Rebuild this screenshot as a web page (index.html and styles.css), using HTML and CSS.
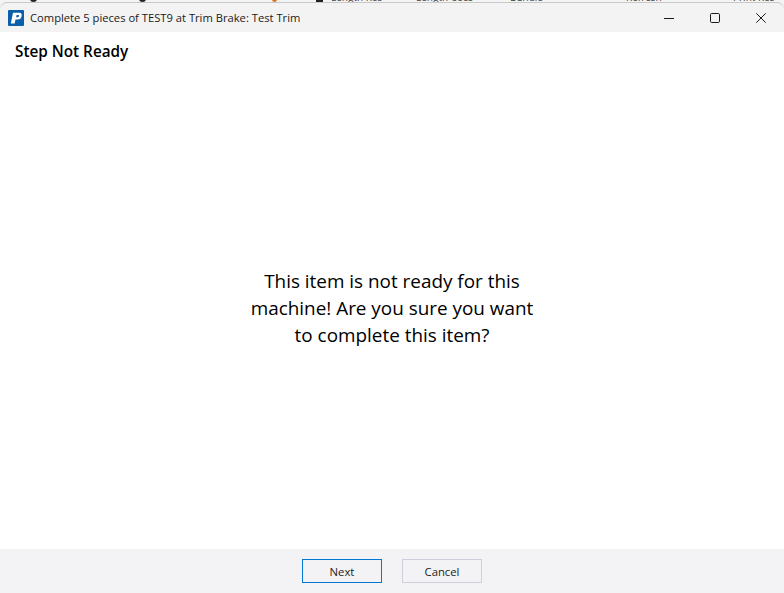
FILE: index.html
```html
<!DOCTYPE html>
<html lang="en">
<head>
<meta charset="utf-8">
<title>Complete 5 pieces of TEST9 at Trim Brake: Test Trim</title>
<link rel="stylesheet" href="styles.css">
</head>
<body>
<div class="backdrop" aria-hidden="true">
  <i class="dot dot-a"></i>
  <i class="dot dot-b"></i>
  <i class="dot dot-c"></i>
  <i class="dot dot-d"></i>
  <span class="frag frag-a">Length Res</span>
  <span class="frag frag-b">Length Uses</span>
  <span class="frag frag-c">Bundle</span>
  <span class="frag frag-d">Refresh</span>
  <span class="frag frag-e">Print Res</span>
</div>
<div class="window">
  <header class="titlebar">
    <svg class="app-icon" width="16" height="16" viewBox="0 0 16 16" aria-hidden="true">
      <rect width="16" height="16" rx="1" fill="#0b5ea8"/>
      <path d="M2.8 13.5 L5 2.8 H11.3 Q14.2 2.8 13.6 6 Q13 9.6 9.8 9.6 H7.5 L6.7 13.5 Z M8.1 7.3 H9.6 Q10.7 7.3 11 6 Q11.2 5 10.2 5 H8.6 Z" fill="#fff" fill-rule="evenodd"/>
    </svg>
    <span class="title">Complete 5 pieces of TEST9 at Trim Brake: Test Trim</span>
    <div class="controls">
      <button class="control" aria-label="Minimize"><svg width="10" height="10" viewBox="0 0 10 10"><path d="M0 5.5H10" stroke="#1a1a1a" stroke-width="1"/></svg></button>
      <button class="control" aria-label="Maximize"><svg width="10" height="10" viewBox="0 0 10 10"><rect x=".5" y=".5" width="9" height="9" rx="1.2" fill="none" stroke="#1a1a1a"/></svg></button>
      <button class="control" aria-label="Close"><svg width="10" height="10" viewBox="0 0 10 10"><path d="M.3 .3L9.7 9.7M9.7 .3L.3 9.7" stroke="#1a1a1a" stroke-width="1"/></svg></button>
    </div>
  </header>
  <main class="content">
    <h1 class="heading">Step Not Ready</h1>
    <div class="message-area">
      <p class="message">This item is not ready for this machine! Are you sure you want to complete this item?</p>
    </div>
  </main>
  <footer class="footer">
    <button class="btn btn-primary">Next</button>
    <button class="btn">Cancel</button>
  </footer>
</div>
</body>
</html>
```
FILE: styles.css
```css
* { box-sizing: border-box; }
html, body { margin: 0; height: 100%; }
body {
  position: relative;
  background: #f4f4f4;
  font-family: "Open Sans", "Noto Sans", "Liberation Sans", sans-serif;
  color: #000;
  overflow: hidden;
}
.backdrop {
  position: absolute;
  top: 0;
  left: 0;
  width: 100%;
  height: 2px;
  overflow: hidden;
}
.dot {
  position: absolute;
  top: -4px;
  width: 7px;
  height: 6px;
  border-radius: 50%;
  background: #222;
}
.dot-a { left: 30px; }
.dot-b { left: 139px; }
.dot-c { left: 272px; width: 5px; background: #d9741c; }
.dot-d { left: 316px; border-radius: 0; }
.frag {
  position: absolute;
  bottom: -1px;
  font-size: 10px;
  line-height: 12px;
  color: #444;
  white-space: nowrap;
}
.frag-a { left: 331px; }
.frag-b { left: 416px; }
.frag-c { left: 510px; }
.frag-d { left: 626px; }
.frag-e { left: 733px; }
.window {
  height: 593px;
  padding-top: 2px;
  display: flex;
  flex-direction: column;
  position: relative;
}
.titlebar {
  height: 30px;
  flex: none;
  display: flex;
  align-items: center;
  padding-left: 8px;
  background: #f3f3f3;
  border-top: 1px solid #c8c8c8;
  border-radius: 7px 7px 0 0;
}
.app-icon { flex: none; }
.title {
  margin-left: 6px;
  font-size: 11.2px;
  color: #1a1a1a;
  white-space: nowrap;
}
.controls {
  margin-left: auto;
  display: flex;
}
.control {
  width: 46px;
  height: 29px;
  padding: 0;
  border: 0;
  background: none;
  display: flex;
  align-items: center;
  justify-content: center;
}
.content {
  flex: 1;
  display: flex;
  flex-direction: column;
  background: #fff;
}
.heading {
  margin: 0;
  padding: 10px 15px 0;
  font-size: 15.3px;
  line-height: 19px;
  font-weight: 600;
}
.message-area {
  flex: 1;
  display: flex;
  align-items: center;
  justify-content: center;
  padding-top: 7px;
}
.message {
  margin: 0;
  width: 295px;
  text-align: center;
  font-size: 18.9px;
  line-height: 27px;
}
.footer {
  height: 44px;
  flex: none;
  display: flex;
  justify-content: center;
  align-items: flex-start;
  gap: 20px;
  padding-top: 10px;
  background: #f3f3f6;
}
.btn {
  width: 80px;
  height: 24px;
  padding: 0;
  border: 1px solid #cfcfdc;
  background: #f3f3f6;
  font-family: inherit;
  font-size: 11.3px;
  color: #222;
}
.btn-primary { border-color: #0078d4; }
```
